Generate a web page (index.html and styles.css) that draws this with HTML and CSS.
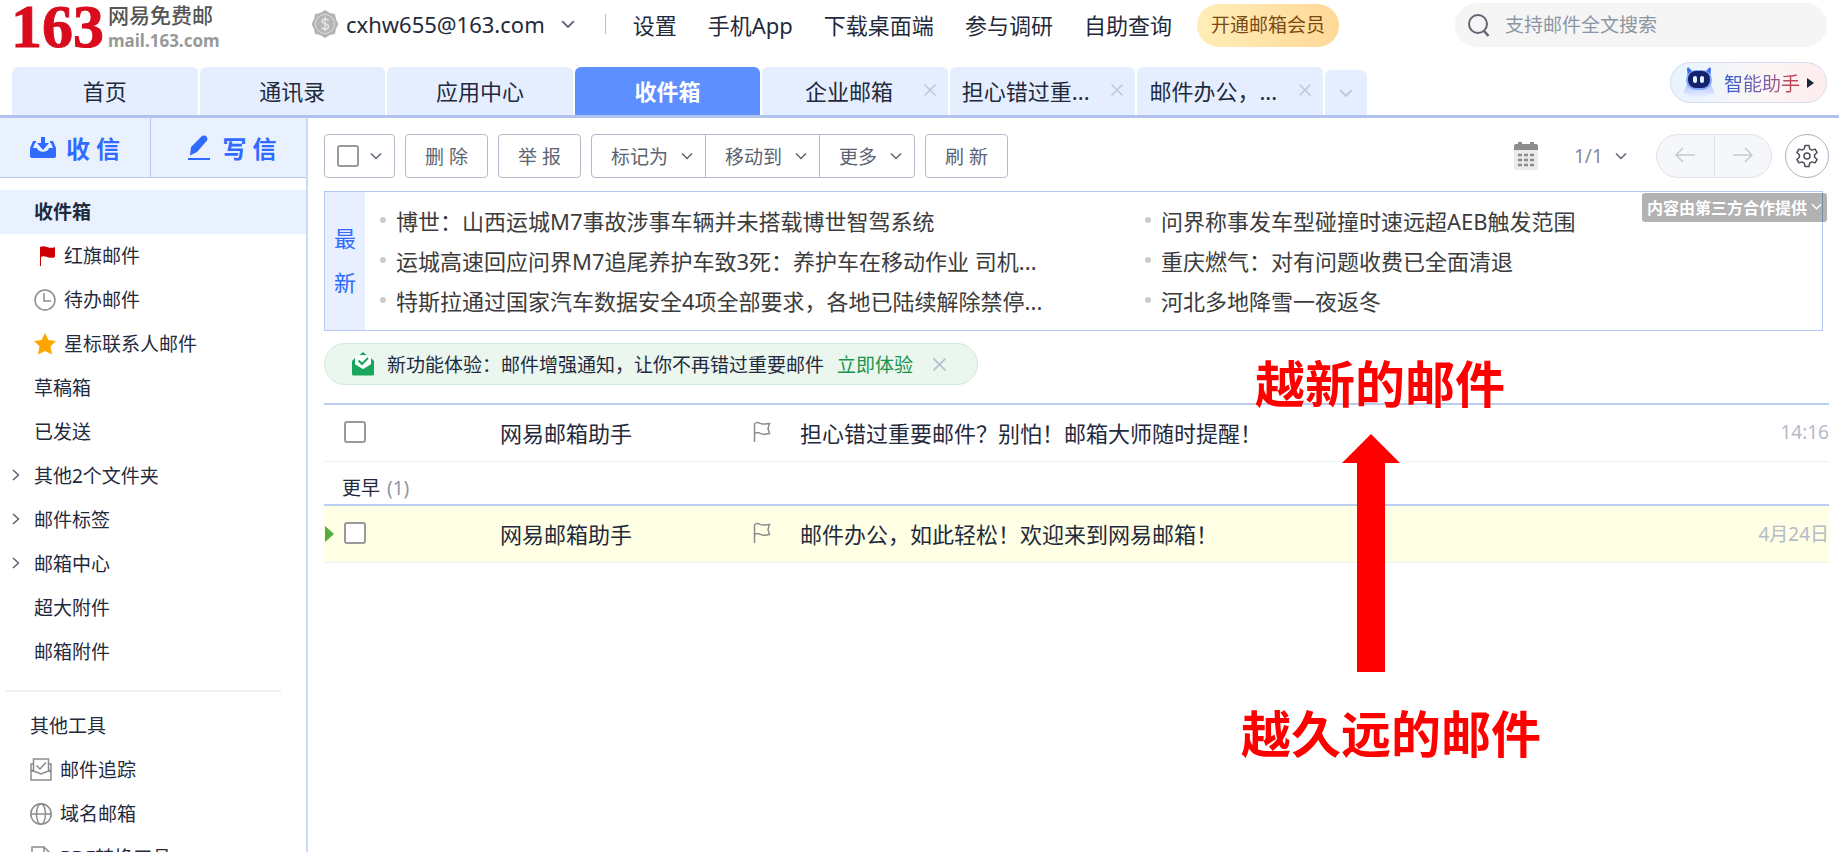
FILE: index.html
```html
<!DOCTYPE html>
<html lang="zh-CN">
<head>
  <meta charset="UTF-8">
  <meta name="viewport" content="width=device-width, initial-scale=1.0">
  <title>163网易免费邮</title>
  <link rel="stylesheet" href="styles.css">
</head>
<body>
  <svg class="defs" aria-hidden="true">
    <symbol id="down" viewBox="0 0 12 12"><path d="M1 3.5l5 5 5-5" fill="none" stroke="currentColor" stroke-width="1.5"/></symbol>
    <symbol id="right" viewBox="0 0 12 12"><path d="M3 1l5.5 5L3 11" fill="none" stroke="currentColor" stroke-width="1.5"/></symbol>
    <symbol id="close" viewBox="0 0 12 12"><path d="M.5.5l11 11M11.5.5l-11 11" fill="none" stroke="currentColor" stroke-width="1.5"/></symbol>
    <symbol id="flag" viewBox="0 0 18 22"><path d="M1.5 21V3.500c0-2 3-2.500 5-1.500 3 2 6 1 10 .5l-1.500 5 1.500 5c-4 1-7 1.500-10-.5-2-1-4 0-5 1" fill="none" stroke="currentColor" stroke-width="1.500"/></symbol>
  </svg>

  <header class="header">
    <a class="logo" href="#">
      <span class="logo-num">163</span>
      <span class="logo-text"><b>网易免费邮</b><span>mail.163.com</span></span>
    </a>
    <button class="account">
      <svg width="28" height="30" viewBox="0 0 28 30"><path d="M14 1l5 3 5 1 1 5 2.500 5-2.500 5-1 5-5 1-5 3-5-3-5-1-1-5L.5 15 3 10l1-5 5-1z" fill="#b5b5b5"/><circle cx="14" cy="15" r="9.500" fill="none" stroke="#dcdcdc"/><path d="M17.500 11.500c-2-2.500-7-1.500-6.500 1 .5 3 6.500 1.500 6.500 5 0 3-5 3.500-7 1M14 8v14" fill="none" stroke="#e6e6e6" stroke-width="1.500"/></svg>
      <span>cxhw655@163.com</span>
      <svg class="chev" width="14" height="14"><use href="#down"/></svg>
    </button>
    <nav class="top-nav">
      <a href="#">设置</a>
      <a href="#">手机App</a>
      <a href="#">下载桌面端</a>
      <a href="#">参与调研</a>
      <a href="#">自助查询</a>
    </nav>
    <a class="vip" href="#">开通邮箱会员</a>
    <form class="search">
      <svg width="24" height="28" viewBox="0 0 24 28"><circle cx="11" cy="13" r="9" fill="none" stroke="#5f6672" stroke-width="2"/><path d="M17 20l4.500 5" stroke="#5f6672" stroke-width="2.500"/></svg>
      <input type="text" placeholder="支持邮件全文搜索" aria-label="支持邮件全文搜索">
    </form>
  </header>

  <div class="tab-bar">
    <div class="tabs">
      <div class="tab"><a href="#">首页</a></div>
      <div class="tab"><a href="#">通讯录</a></div>
      <div class="tab"><a href="#">应用中心</a></div>
      <div class="tab active"><a href="#">收件箱</a></div>
      <div class="tab closable"><a href="#">企业邮箱</a><button aria-label="关闭"><svg width="12" height="12"><use href="#close"/></svg></button></div>
      <div class="tab closable"><a class="cut" href="#">担心错过重...</a><button aria-label="关闭"><svg width="12" height="12"><use href="#close"/></svg></button></div>
      <div class="tab closable"><a class="cut" href="#">邮件办公，...</a><button aria-label="关闭"><svg width="12" height="12"><use href="#close"/></svg></button></div>
    </div>
    <button class="tab-more" aria-label="更多标签"><svg width="14" height="14"><use href="#down"/></svg></button>
    <button class="assistant">
      <svg width="32" height="34" viewBox="0 0 32 34">
        <defs><linearGradient id="bot" x1="0" y1="0" x2="0" y2="1"><stop offset="0" stop-color="#8fadff"/><stop offset="1" stop-color="#f4f7ff"/></linearGradient></defs>
        <path d="M16 11c7 0 12 5 13 10l2.500 5c0 2-2 3-4 2-2 4-6 5-11.500 5s-9.500-1-11.500-5c-2 1-4 0-4-2L3 21c1-5 6-10 13-10z" fill="url(#bot)"/>
        <path d="M5 12L4 3c0-2 2-2 3 0l3 3zM27 12l1-9c0-2-2-2-3 0l-3 3z" fill="#3f6df0"/>
        <rect x="3" y="4" width="26" height="20" rx="10" fill="#86a6f8"/>
        <rect x="5" y="5" width="22" height="17" rx="8" fill="#14226e"/>
        <rect x="10" y="10" width="4" height="7" rx="2" fill="#e4f4ff"/><rect x="17" y="10" width="4" height="7" rx="2" fill="#e4f4ff"/>
      </svg>
      <span>智能助手</span>
      <i class="tri"></i>
    </button>
  </div>

  <div class="body">
    <aside class="sidebar">
      <div class="actions">
        <button class="receive">
          <svg width="26" height="24" viewBox="0 0 26 24"><path d="M0 12l3-7h3v2H5L3 12h4c1 5 11 5 12 0h4l-2-5h-1V5h3l3 7v8a2 2 0 0 1-2 2H2a2 2 0 0 1-2-2z" fill="#2f6bff"/><path d="M11 1h4v6h4l-6 7-6-7h4z" fill="#2f6bff"/></svg>
          收 信
        </button>
        <button class="compose">
          <svg width="22" height="26" viewBox="0 0 22 26"><path d="M13 2c2.500-3.500 8-.5 6 3.500L9 17l-7 3.500L3 12z" fill="#2f6bff"/><path d="M0 24h22" stroke="#2f6bff" stroke-width="2"/></svg>
          写 信
        </button>
      </div>
      <ul class="folders">
        <li class="selected"><a href="#">收件箱</a></li>
        <li><a href="#"><svg width="22" height="22" viewBox="0 0 22 22"><path d="M6 2c5-3 9 3 15 0v10c-6 3-10-3-14 0v9H6z" fill="#c00"/></svg>红旗邮件</a></li>
        <li><a href="#"><svg width="22" height="22" viewBox="0 0 22 22"><circle cx="11" cy="11" r="10" fill="none" stroke="#8c8c8c" stroke-width="1.500"/><path d="M10 4v8h7" fill="none" stroke="#8c8c8c" stroke-width="1.500"/></svg>待办邮件</a></li>
        <li><a href="#"><svg width="22" height="22" viewBox="0 0 22 22"><path d="M11 0l3.400 7 7.600 1-5.500 5.300L18 21.500 11 18l-7 3.500 1.500-8.200L0 8l7.600-1z" fill="#ffa500"/></svg>星标联系人邮件</a></li>
        <li><a href="#">草稿箱</a></li>
        <li><a href="#">已发送</a></li>
        <li><svg class="expand" width="12" height="12"><use href="#right"/></svg><a href="#">其他2个文件夹</a></li>
        <li><svg class="expand" width="12" height="12"><use href="#right"/></svg><a href="#">邮件标签</a></li>
        <li><svg class="expand" width="12" height="12"><use href="#right"/></svg><a href="#">邮箱中心</a></li>
        <li><a href="#">超大附件</a></li>
        <li><a href="#">邮箱附件</a></li>
      </ul>
      <ul class="tools">
        <li>其他工具</li>
        <li><a href="#"><svg width="22" height="24" viewBox="0 0 22 24"><g fill="none" stroke="#8c8c8c" stroke-width="1.500"><path d="M3.500 6H1v16h20V6h-2.500M1 12l10 4 10-4M3.500 13V1h15v12"/><path d="M6.500 7.500l3.500 3.500 6-6.500"/></g></svg>邮件追踪</a></li>
        <li><a href="#"><svg width="22" height="24" viewBox="0 0 22 24"><g fill="none" stroke="#8c8c8c" stroke-width="1.500"><circle cx="11" cy="12" r="10.200"/><ellipse cx="11" cy="12" rx="4.500" ry="10.200"/><path d="M1 12h20"/></g></svg>域名邮箱</a></li>
        <li><a href="#"><svg width="22" height="24" viewBox="0 0 22 24"><path d="M2 1h12l6 6v16H2zM14 1v6h6" fill="none" stroke="#8c8c8c" stroke-width="1.500"/></svg>PDF转换工具</a></li>
      </ul>
    </aside>

    <main class="main">
      <div class="toolbar">
        <div class="btn select-all"><input type="checkbox" aria-label="全选"><svg width="12" height="12"><use href="#down"/></svg></div>
        <button class="btn">删 除</button>
        <button class="btn">举 报</button>
        <div class="btn-group">
          <button>标记为<svg width="12" height="12"><use href="#down"/></svg></button>
          <button>移动到<svg width="12" height="12"><use href="#down"/></svg></button>
          <button>更多<svg width="12" height="12"><use href="#down"/></svg></button>
        </div>
        <button class="btn">刷 新</button>
        <div class="toolbar-right">
          <button class="calendar" aria-label="日历"><svg width="24" height="28" viewBox="0 0 24 28"><rect y="4" width="24" height="24" rx="2" fill="#ebebeb"/><path d="M0 8V4a2 2 0 0 1 2-2h2V0h4v2h8V0h4v2h2a2 2 0 0 1 2 2v4z" fill="#8c8c8c"/><path d="M4 13h16M4 18h16M4 23h16" stroke="#8c8c8c" stroke-width="2.500" stroke-dasharray="4 2"/></svg></button>
          <label class="page"><select aria-label="页码"><option>1/1</option></select><svg width="12" height="12"><use href="#down"/></svg></label>
          <div class="pager">
            <button aria-label="上一页"><svg width="20" height="16" viewBox="0 0 20 16"><path d="M20 8H1M8 1L1 8l7 7" fill="none" stroke="#c6c9d0" stroke-width="1.500"/></svg></button>
            <button aria-label="下一页"><svg width="20" height="16" viewBox="0 0 20 16"><path d="M0 8h19M12 1l7 7-7 7" fill="none" stroke="#c6c9d0" stroke-width="1.500"/></svg></button>
          </div>
          <button class="gear" aria-label="设置"><svg width="22" height="24" viewBox="0 0 22 24"><g fill="none" stroke="#4a4f5a" stroke-width="1.500" stroke-linejoin="round"><path d="M9 1.500h4l.7 3.300 2.300 1.300 3.100-1 2 3.400-2.500 2.300v2.400l2.500 2.300-2 3.400-3.100-1-2.300 1.300-.7 3.300H9l-.7-3.300L6 17.900l-3.100 1-2-3.400 2.500-2.300v-2.400L.9 8.500l2-3.400 3.100 1 2.300-1.300z"/><circle cx="11" cy="12" r="3"/></g></svg></button>
        </div>
      </div>

      <section class="news">
        <div class="news-label">最新</div>
        <ul>
          <li><a href="#">博世：山西运城M7事故涉事车辆并未搭载博世智驾系统</a></li>
          <li><a href="#">问界称事发车型碰撞时速远超AEB触发范围</a></li>
          <li><a href="#">运城高速回应问界M7追尾养护车致3死：养护车在移动作业 司机...</a></li>
          <li><a href="#">重庆燃气：对有问题收费已全面清退</a></li>
          <li><a href="#">特斯拉通过国家汽车数据安全4项全部要求，各地已陆续解除禁停...</a></li>
          <li><a href="#">河北多地降雪一夜返冬</a></li>
        </ul>
        <button class="provider">内容由第三方合作提供<svg width="11" height="11"><use href="#down"/></svg></button>
      </section>

      <div class="promo">
        <svg width="22" height="24" viewBox="0 0 22 24"><path d="M0 9l3-3v6l8 5 8-5V6l3 3v13a1.500 1.500 0 0 1-1.500 1.500h-19A1.500 1.500 0 0 1 0 22z" fill="#17a65b"/><path d="M7.500 3L11 0l3.500 3z" fill="#17a65b"/><path d="M3 4h16v8l-8 5-8-5z" fill="#fff"/><path d="M6.500 8.500l3.500 3.500 6-6" fill="none" stroke="#17a65b" stroke-width="2"/></svg>
        <span>新功能体验：邮件增强通知，让你不再错过重要邮件</span>
        <a href="#">立即体验</a>
        <button aria-label="关闭"><svg width="13" height="13" viewBox="0 0 12 12"><use href="#close"/></svg></button>
      </div>

      <table class="mails">
        <tbody>
          <tr>
            <td class="check"><input type="checkbox" aria-label="选择邮件"></td>
            <td class="from">网易邮箱助手</td>
            <td class="mark"><svg width="18" height="22"><use href="#flag"/></svg></td>
            <td class="subject"><a href="#">担心错过重要邮件？别怕！邮箱大师随时提醒！</a></td>
            <td class="time">14:16</td>
          </tr>
          <tr class="group"><th colspan="5">更早 <span>(1)</span></th></tr>
          <tr class="current">
            <td class="check"><i class="pointer"></i><input type="checkbox" aria-label="选择邮件"></td>
            <td class="from">网易邮箱助手</td>
            <td class="mark"><svg width="18" height="22"><use href="#flag"/></svg></td>
            <td class="subject"><a href="#">邮件办公，如此轻松！欢迎来到网易邮箱！</a></td>
            <td class="time">4月24日</td>
          </tr>
        </tbody>
      </table>

      <p class="note note-new">越新的邮件</p>
      <svg class="note-arrow" width="58" height="238" viewBox="0 0 58 238"><path d="M29 0l29 29H43v209H15V29H0z" fill="#f00"/></svg>
      <p class="note note-old">越久远的邮件</p>
    </main>
  </div>
</body>
</html>
```

FILE: styles.css
```css
:root {
  --blue: #2f6bff;
  --line: #b7c9f1;
  --pale: #e5eeff;
  --text: #1f2a3d;
  --muted: #5b6373;
  --btn-border: #b4bac7;
}
* {
  box-sizing: border-box;
  margin: 0;
  padding: 0;
}
body {
  height: 100vh;
  display: flex;
  flex-direction: column;
  overflow: hidden;
  background: #fff;
  color: var(--text);
  font-family: "Noto Sans", "Noto Sans CJK SC", sans-serif;
  font-size: 19px;
}
a {
  color: inherit;
  text-decoration: none;
}
ul {
  list-style: none;
}
button, input, select {
  font: inherit;
  color: inherit;
  border: 0;
  background: none;
}
button {
  cursor: pointer;
}
svg {
  flex: none;
}
.defs {
  position: absolute;
  width: 0;
  height: 0;
}
input[type="checkbox"] {
  appearance: none;
  width: 22px;
  height: 22px;
  border: 2px solid #9a9a9a;
  border-radius: 3px;
  background: #fff;
}

/* header */
.header {
  flex: none;
  height: 50px;
  padding: 0 12px 0 11px;
  display: flex;
  align-items: center;
}
.logo {
  display: flex;
  gap: 4px;
  width: 300px;
}
.logo-num {
  padding-top: 4px;
  font-family: "Liberation Serif", serif;
  font-weight: bold;
  font-size: 62px;
  line-height: 50px;
  color: #d90b1c;
  -webkit-text-stroke: 1px #d90b1c;
}
.logo-text {
  display: flex;
  flex-direction: column;
  padding-top: 6px;
  line-height: 25px;
  font-size: 17px;
  font-weight: bold;
  color: #999;
}
.logo-text b {
  font-size: 21px;
  font-weight: 500;
  color: #555;
}
.account {
  display: flex;
  align-items: center;
  gap: 7px;
  font-size: 22px;
  padding: 0 30px 2px 0;
}
.account .chev {
  margin-left: 9px;
  color: var(--muted);
}
.top-nav {
  display: flex;
  align-items: center;
  gap: 31px;
  padding-bottom: 2px;
  font-size: 22px;
}
.top-nav::before {
  content: "";
  width: 1px;
  height: 20px;
  margin-right: -4px;
  background: #b9bec8;
}
.vip {
  height: 43px;
  margin-left: 25px;
  padding: 0 14px;
  border-radius: 22px;
  line-height: 43px;
  color: #7a4a12;
  background: linear-gradient(90deg, #ffeeb8, #ffd897);
}
.search {
  width: 372px;
  height: 44px;
  margin-left: auto;
  padding: 0 12px;
  border-radius: 22px;
  background: #f5f5f5;
  display: flex;
  align-items: center;
  gap: 14px;
}
.search input {
  flex: 1;
  min-width: 0;
  outline: 0;
}
.search input::placeholder {
  color: #8d95a3;
}

/* tabs */
.tab-bar {
  flex: none;
  height: 68px;
  padding: 0 12px;
  border-bottom: 3px solid #afc3ee;
  display: flex;
  align-items: flex-end;
  gap: 2px;
}
.tabs {
  width: 1311px;
  display: grid;
  grid-template-columns: repeat(7, 1fr);
  gap: 2px;
}
.tab {
  height: 48px;
  padding: 0 12px 2px;
  border-radius: 6px 6px 0 0;
  background: var(--pale);
  display: flex;
  align-items: center;
  justify-content: center;
  font-size: 22px;
}
.tab a {
  flex: 1;
  text-align: center;
  white-space: nowrap;
}
.tab .cut {
  text-align: left;
}
.tab.active {
  background: #5e8fff;
  color: #fff;
  font-weight: bold;
}
.tab button, .tab-more {
  display: flex;
  align-items: center;
  justify-content: center;
  color: #bac6da;
}
.tab-more {
  width: 42px;
  height: 45px;
  border-radius: 6px 6px 0 0;
  background: var(--pale);
}
.assistant {
  height: 41px;
  width: 157px;
  margin: 0 0 12px auto;
  padding-left: 12px;
  border: 1px solid #d6dbee;
  border-radius: 21px;
  background: linear-gradient(90deg, #e6f4ff, #fbf6f4 60%, #ffecee);
  display: flex;
  align-items: center;
  gap: 9px;
}
.assistant span {
  background: linear-gradient(90deg, #3257cf, #8a5fa0 60%, #d83a3a);
  background-clip: text;
  color: transparent;
  white-space: nowrap;
}
.tri {
  border-left: 7px solid #1b2638;
  border-top: 5px solid transparent;
  border-bottom: 5px solid transparent;
  margin-left: -2px;
}

/* sidebar */
.body {
  flex: 1;
  min-height: 0;
  display: flex;
}
.sidebar {
  flex: none;
  width: 308px;
  overflow: hidden;
  border-right: 2px solid #cbdaf6;
}
.actions {
  display: flex;
  height: 60px;
  background: #e9f1ff;
  border-bottom: 1px solid var(--line);
}
.actions button {
  display: flex;
  align-items: center;
  justify-content: center;
  gap: 10px;
  font-size: 24px;
  font-weight: bold;
  color: var(--blue);
}
.actions .receive {
  width: 151px;
  border-right: 1px solid var(--line);
}
.actions .compose {
  flex: 1;
  gap: 12px;
  padding-left: 8px;
}
.folders {
  margin-top: 12px;
}
.folders li {
  position: relative;
  height: 44px;
  padding-left: 34px;
  line-height: 44px;
}
.folders a, .tools a {
  display: flex;
  align-items: center;
  gap: 8px;
}
.folders .selected {
  background: #e9f1ff;
  font-weight: bold;
}
.expand {
  position: absolute;
  left: 10px;
  top: 15px;
  color: var(--muted);
}
.tools {
  margin: 16px 25px 0 6px;
  padding: 12px 0 0 24px;
  border-top: 2px solid #f0f0f2;
}
.tools li {
  height: 44px;
  line-height: 44px;
}

/* toolbar */
.main {
  position: relative;
  flex: 1;
  min-width: 0;
  padding: 16px 10px 0 16px;
}
.toolbar {
  display: flex;
  align-items: center;
  gap: 10px;
  height: 44px;
  color: var(--muted);
}
.btn, .btn-group {
  height: 44px;
  border: 1px solid var(--btn-border);
  border-radius: 4px;
  display: flex;
  align-items: center;
  white-space: nowrap;
}
.btn {
  padding: 0 19px;
}
.select-all {
  padding: 0 12px;
  gap: 11px;
}
.btn-group button {
  height: 100%;
  padding: 0 12px 0 19px;
  display: flex;
  align-items: center;
  gap: 13px;
}
.btn-group button + button {
  border-left: 1px solid var(--btn-border);
}
.toolbar-right {
  margin-left: auto;
  display: flex;
  align-items: center;
}
.calendar {
  display: flex;
}
.page {
  display: flex;
  align-items: center;
  gap: 12px;
  margin: 0 29px 0 36px;
}
.page select {
  appearance: none;
  color: #858c99;
}
.pager {
  width: 116px;
  height: 44px;
  border: 1px solid #dfe2ea;
  border-radius: 22px;
  background: #f5f7fb;
  display: flex;
}
.pager button {
  flex: 1;
}
.pager button + button {
  border-left: 1px solid #dfe2ea;
}
.gear {
  width: 44px;
  height: 44px;
  margin-left: 13px;
  border: 1px solid #a9b1c2;
  border-radius: 50%;
  display: flex;
  align-items: center;
  justify-content: center;
}

/* news */
.news {
  position: relative;
  display: flex;
  margin: 13px 6px 0 0;
  border: 1px solid #b3c8f3;
  font-size: 22px;
  color: #3c3c3c;
}
.news-label {
  width: 40px;
  padding: 24px 9px 26px;
  line-height: 44px;
  background: #e8efff;
  color: var(--blue);
}
.news ul {
  flex: 1;
  display: grid;
  grid-template-columns: 765px 1fr;
  align-content: start;
  padding: 8px 0 0 15px;
}
.news li {
  display: flex;
  align-items: center;
  gap: 10px;
  height: 40px;
  white-space: nowrap;
}
.news li::before {
  content: "";
  width: 6px;
  height: 6px;
  border-radius: 50%;
  background: #ccc;
}
.provider {
  position: absolute;
  top: 1px;
  right: -5px;
  height: 29px;
  padding: 0 5px 2px;
  border-radius: 3px;
  background: rgba(0, 0, 0, 0.3);
  color: #fff;
  font-size: 16px;
  font-weight: bold;
  display: flex;
  align-items: center;
  gap: 4px;
}

/* promo */
.promo {
  width: fit-content;
  height: 42px;
  margin-top: 12px;
  padding: 0 31px 0 27px;
  border: 1px solid #d0e9da;
  border-radius: 21px;
  background: #eaf6ee;
  display: flex;
  align-items: center;
  gap: 13px;
}
.promo a {
  color: #17954f;
}
.promo button {
  display: flex;
  margin-left: 7px;
  color: #b4bfd0;
}

/* mail list */
.mails {
  width: 100%;
  margin-top: 18px;
  border-spacing: 0;
  border-top: 2px solid #bccdf2;
  table-layout: fixed;
  font-size: 22px;
}
.mails td {
  height: 57px;
  padding-bottom: 3px;
  border-bottom: 1px solid #ecf0f7;
}
.mails .check {
  position: relative;
  width: 176px;
  padding-left: 20px;
}
.check input {
  display: block;
}
.mails .from {
  width: 253px;
}
.mails .mark {
  width: 47px;
  color: #8c8c8c;
}
.mark svg {
  display: block;
}
.mails .time {
  width: 120px;
  text-align: right;
  font-size: 19px;
  color: #b5bac7;
}
.group th {
  height: 44px;
  padding: 10px 0 0 18px;
  border-bottom: 2px solid #bccdf2;
  font-size: 19px;
  font-weight: normal;
  line-height: 28px;
  text-align: left;
}
.group span {
  margin-left: 2px;
  color: #8d95a3;
}
.current {
  background: #feffe4;
}
.pointer {
  position: absolute;
  left: 1px;
  top: 20px;
  border-left: 9px solid #4fae3c;
  border-top: 8px solid transparent;
  border-bottom: 8px solid transparent;
}

/* notes lying over the list */
.note, .note-arrow {
  position: absolute;
}
.note {
  font-size: 50px;
  line-height: 60px;
  font-weight: bold;
  color: #f00;
  white-space: nowrap;
}
.note-new {
  left: 947px;
  top: 236px;
}
.note-arrow {
  left: 1034px;
  top: 316px;
}
.note-old {
  left: 933px;
  top: 586px;
}
```
